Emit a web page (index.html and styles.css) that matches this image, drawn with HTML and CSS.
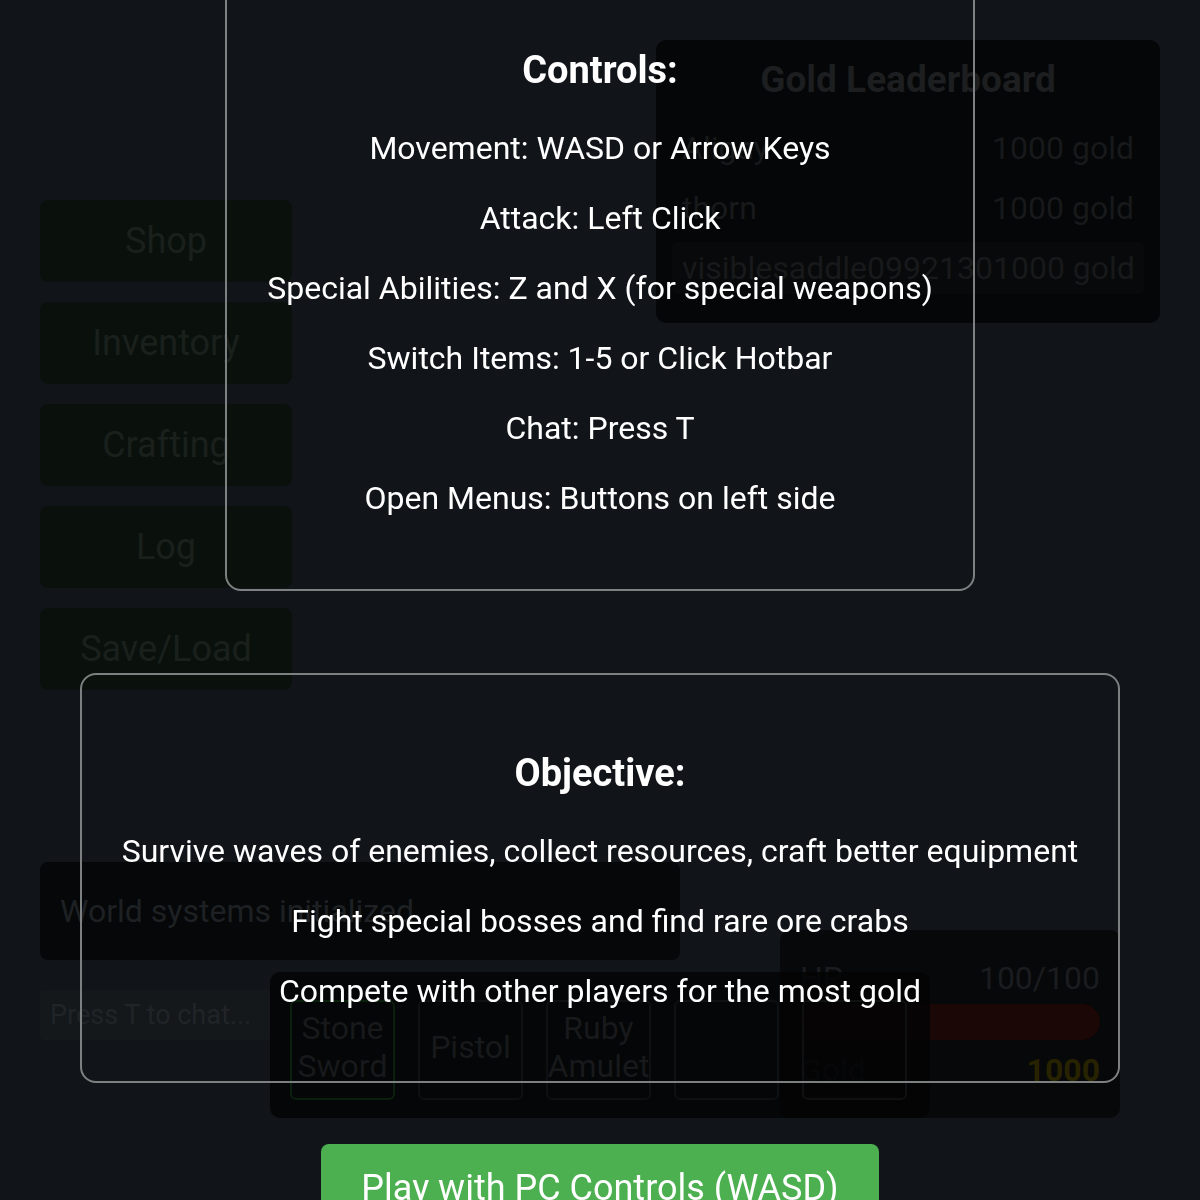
FILE: index.html
```html
<!DOCTYPE html>
<html lang="en">
<head>
<meta charset="utf-8">
<title>Game</title>
<link rel="stylesheet" href="styles.css">
</head>
<body>
<div class="game">
  <nav class="menu">
    <button class="menu-btn">Shop</button>
    <button class="menu-btn">Inventory</button>
    <button class="menu-btn">Crafting</button>
    <button class="menu-btn">Log</button>
    <button class="menu-btn">Save/Load</button>
  </nav>

  <section class="leaderboard">
    <h3 class="lb-title">Gold Leaderboard</h3>
    <ul class="lb-list">
      <li class="lb-row"><span>Aligay</span><span>1000 gold</span></li>
      <li class="lb-row"><span>thorn</span><span>1000 gold</span></li>
      <li class="lb-row lb-me"><span>visiblesaddle0992130</span><span>1000 gold</span></li>
    </ul>
  </section>

  <section class="chat-log">World systems initialized</section>
  <div class="chat-input">Press T to chat...</div>

  <section class="stats">
    <div class="stat-row"><span>HP</span><span>100/100</span></div>
    <div class="hp-bar"><div class="hp-fill" style="width:100%"></div></div>
    <div class="stat-row"><span>Gold</span><span class="gold-val">1000</span></div>
  </section>

  <section class="hotbar">
    <div class="slot selected">Stone Sword</div>
    <div class="slot">Pistol</div>
    <div class="slot">Ruby Amulet</div>
    <div class="slot"></div>
    <div class="slot"></div>
  </section>
</div>

<div class="overlay">
  <div class="info-box controls">
    <h2 class="info-title">Controls:</h2>
    <p class="info-line">Movement: WASD or Arrow Keys</p>
    <p class="info-line">Attack: Left Click</p>
    <p class="info-line">Special Abilities: Z and X (for special weapons)</p>
    <p class="info-line">Switch Items: 1-5 or Click Hotbar</p>
    <p class="info-line">Chat: Press T</p>
    <p class="info-line">Open Menus: Buttons on left side</p>
  </div>
  <div class="info-box objective">
    <h2 class="info-title">Objective:</h2>
    <p class="info-line">Survive waves of enemies, collect resources, craft better equipment</p>
    <p class="info-line">Fight special bosses and find rare ore crabs</p>
    <p class="info-line">Compete with other players for the most gold</p>
  </div>
  <button class="play-btn">Play with PC Controls (WASD)</button>
</div>
</body>
</html>
```

FILE: styles.css
```css
* { box-sizing: border-box; }

html, body {
  margin: 0;
  padding: 0;
  width: 1200px;
  height: 1200px;
  overflow: hidden;
  background: #11151a;
  font-family: Roboto, "Liberation Sans", sans-serif;
}

.game {
  position: relative;
  width: 1200px;
  height: 1200px;
}

/* left menu */
.menu {
  position: absolute;
  left: 40px;
  top: 200px;
  display: flex;
  flex-direction: column;
  gap: 20px;
}
.menu-btn {
  width: 252px;
  height: 82px;
  border: none;
  border-radius: 8px;
  background: #0a110c;
  color: #1a201c;
  font-family: inherit;
  font-size: 36px;
}

/* leaderboard */
.leaderboard {
  position: absolute;
  left: 656px;
  top: 40px;
  width: 504px;
  height: 283px;
  padding: 20px 16px;
  background: #050607;
  border-radius: 10px;
}
.lb-title {
  margin: 0 0 22px;
  text-align: center;
  font-size: 37px;
  line-height: 40px;
  font-weight: 700;
  color: #1c1e20;
}
.lb-list {
  list-style: none;
  margin: 0;
  padding: 0;
  display: flex;
  flex-direction: column;
  gap: 8px;
}
.lb-row {
  display: flex;
  justify-content: space-between;
  padding: 8px 10px;
  font-size: 32px;
  line-height: 36px;
  color: #17191b;
  border-radius: 6px;
  white-space: nowrap;
}
.lb-me { background: #08090a; }

/* chat */
.chat-log {
  position: absolute;
  left: 40px;
  top: 862px;
  width: 640px;
  height: 98px;
  padding: 0 20px;
  display: flex;
  align-items: center;
  background: #060708;
  border-radius: 8px;
  font-size: 32px;
  color: #1e2124;
}
.chat-input {
  position: absolute;
  left: 40px;
  top: 990px;
  width: 232px;
  height: 50px;
  padding: 0 10px;
  display: flex;
  align-items: center;
  background: #14181b;
  border-radius: 4px;
  font-size: 27px;
  color: #202428;
  white-space: nowrap;
  overflow: hidden;
}

/* stats */
.stats {
  position: absolute;
  left: 780px;
  top: 930px;
  width: 340px;
  height: 188px;
  padding: 30px 20px 20px;
  background: #07080a;
  border-radius: 10px;
  display: flex;
  flex-direction: column;
}
.stat-row {
  display: flex;
  justify-content: space-between;
  font-size: 32px;
  line-height: 36px;
  color: #1a1c1f;
}
.hp-bar {
  height: 36px;
  margin: 8px 0 12px;
  border-radius: 18px;
  background: #0d0607;
  overflow: hidden;
}
.hp-fill {
  height: 100%;
  background: #1c0707;
  border-radius: 18px;
}
.gold-val {
  font-weight: 700;
  color: #272200;
}

/* hotbar */
.hotbar {
  position: absolute;
  left: 270px;
  top: 972px;
  width: 660px;
  height: 146px;
  padding: 28px 20px 18px;
  display: flex;
  gap: 23px;
  background: rgba(3, 4, 5, 0.85);
  border-radius: 10px;
}
.slot {
  width: 105px;
  height: 100px;
  padding-bottom: 6px;
  border: 2px solid #0e1011;
  border-radius: 6px;
  display: flex;
  align-items: center;
  justify-content: center;
  text-align: center;
  font-size: 32px;
  line-height: 38px;
  color: #17191b;
}
.slot.selected { border-color: #0a1f0c; }

/* instructions overlay */
.overlay {
  position: fixed;
  inset: 0;
  display: flex;
  flex-direction: column;
  align-items: center;
  justify-content: center;
  color: #ffffff;
}
.info-box {
  flex: none;
  border: 2px solid #7c8081;
  border-radius: 16px;
  display: flex;
  flex-direction: column;
  align-items: center;
  gap: 36px;
}
.info-box.controls {
  padding: 80px 40px 74px;
  margin-bottom: 82px;
}
.info-box.objective {
  padding: 78px 40px 73px;
  margin-bottom: 61px;
}
.info-title {
  margin: 0 0 5px;
  font-size: 38px;
  line-height: 40px;
  font-weight: 700;
}
.info-line {
  margin: 0;
  font-size: 32px;
  line-height: 34px;
  white-space: nowrap;
}
.play-btn {
  flex: none;
  height: 88px;
  padding: 0 40px;
  border: none;
  border-radius: 8px;
  background: #4caf50;
  color: #ffffff;
  font-family: inherit;
  font-size: 36px;
}
```
